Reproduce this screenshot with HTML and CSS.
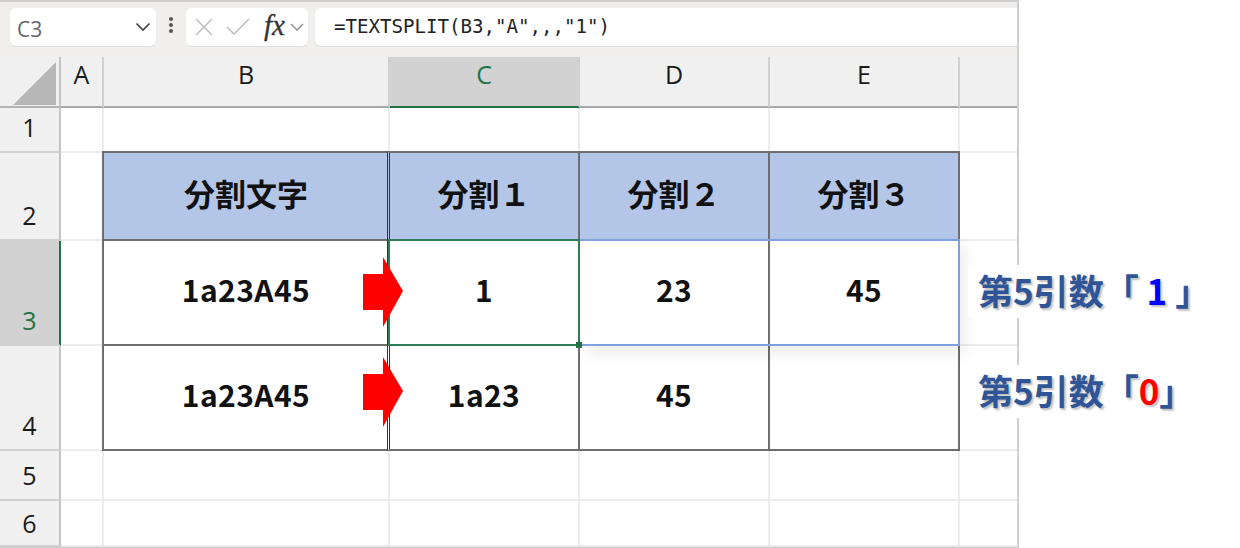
FILE: index.html
```html
<!DOCTYPE html>
<html lang="ja">
<head>
<meta charset="utf-8">
<title>TEXTSPLIT</title>
<link rel="stylesheet" href="styles.css">
</head>
<body>
<div class="app">
  <div class="fbar">
    <div class="namebox"><span class="cellref">C3</span>
      <svg class="chev" width="16" height="10" viewBox="0 0 16 10"><path d="M1.5 1.5 8 8l6.500-6.500" fill="none" stroke="#444" stroke-width="1.700"/></svg>
    </div>
    <svg class="dots" width="6" height="18" viewBox="0 0 6 18"><circle cx="3" cy="3" r="2" fill="#555"/><circle cx="3" cy="9" r="2" fill="#555"/><circle cx="3" cy="15" r="2" fill="#555"/></svg>
    <div class="btnbox">
      <svg class="ico" width="20" height="20" viewBox="0 0 20 20"><path d="M2 2l16 16M18 2 2 18" fill="none" stroke="#bdbdbd" stroke-width="1.500"/></svg>
      <svg class="ico ico-check" width="24" height="18" viewBox="0 0 24 18"><path d="M1 9l7 7L23 1" fill="none" stroke="#bdbdbd" stroke-width="1.500"/></svg>
      <span class="fx">fx</span>
      <svg class="chev2" width="14" height="9" viewBox="0 0 14 9"><path d="M1 1l6 6 6-6" fill="none" stroke="#8a8a8a" stroke-width="1.300"/></svg>
    </div>
    <div class="formula">=TEXTSPLIT(B3,"A",,,"1")</div>
  </div>
  <div class="sheet">
    <div class="hd corner"><svg width="43" height="43" viewBox="0 0 43 43"><path d="M43 0V43H0Z" fill="#b7b7b7"/></svg></div>
    <div class="hd col">A</div><div class="hd col">B</div><div class="hd col sel-col">C</div><div class="hd col">D</div><div class="hd col">E</div><div class="hd col blank"></div>

    <div class="hd row">1</div><div class="c"></div><div class="c"></div><div class="c"></div><div class="c"></div><div class="c"></div><div class="c last"></div>

    <div class="hd row">2</div><div class="c"></div><div class="c th tb-l">分割文字</div><div class="c th dbl">分割１</div><div class="c th">分割２</div><div class="c th">分割３</div><div class="c last"></div>

    <div class="hd row sel-row">3</div><div class="c"></div><div class="c td tb-l">1a23A45</div><div class="c td dbl">1</div><div class="c td">23</div><div class="c td">45</div><div class="c last"></div>

    <div class="hd row">4</div><div class="c"></div><div class="c td tb-l">1a23A45</div><div class="c td dbl">1a23</div><div class="c td">45</div><div class="c td"></div><div class="c last"></div>

    <div class="hd row">5</div><div class="c"></div><div class="c"></div><div class="c"></div><div class="c"></div><div class="c"></div><div class="c last"></div>

    <div class="hd row row-last">6</div><div class="c"></div><div class="c"></div><div class="c"></div><div class="c"></div><div class="c"></div><div class="c last"></div>

    <div class="range"></div>
    <div class="active"><span class="handle"></span></div>
  </div>
</div>
<svg class="arrow arrow-1" width="40" height="70" viewBox="0 0 40 70"><path d="M20 0 40 34 20 70V53H0V17H20Z" fill="#ff0000"/></svg>
<svg class="arrow arrow-2" width="40" height="70" viewBox="0 0 40 70"><path d="M20 0 40 34 20 70V53H0V17H20Z" fill="#ff0000"/></svg>
<div class="note note-1">第5引数「<span class="blue"> 1 </span>」</div>
<div class="note note-2">第5引数「<span class="red">0</span>」</div>
</body>
</html>
```
FILE: styles.css
```css
* { box-sizing: border-box; }
html, body { margin: 0; padding: 0; }
body {
  width: 1240px;
  height: 548px;
  background: #fff;
  overflow: hidden;
  position: relative;
  font-family: "Noto Sans CJK JP", "Noto Sans", sans-serif;
}
.app {
  width: 1019px;
  height: 548px;
  border-right: 2px solid #d0d0d0;
  border-bottom: 1px solid #c8c8c8;
  display: flex;
  flex-direction: column;
}
.fbar {
  height: 57px;
  flex: none;
  background: #f1efee;
  border-top: 2px solid #cfcfcf;
  padding: 6px 0 11px 10px;
  display: flex;
  align-items: stretch;
}
.namebox, .btnbox, .formula { background: #fff; border-radius: 6px; box-shadow: 0 1px 0 #e0e0e0; }
.namebox {
  width: 146px;
  display: flex;
  align-items: center;
  justify-content: space-between;
  padding: 3px 5px 0 7px;
}
.cellref { font: 21px "Open Sans", sans-serif; color: #666; }
.chev { margin-top: -3px; }
.dots { margin: 8px 12px 0 12px; }
.btnbox {
  width: 122px;
  display: flex;
  align-items: center;
  padding: 0 0 0 8px;
}
.ico-check { margin-left: 12px; }
.fx {
  font: italic 29px/1 "Liberation Serif", serif;
  color: #333;
  -webkit-text-stroke: .3px #333;
  margin-left: 14px;
  margin-top: -4px;
}
.chev2 { margin-left: 5px; }
.formula {
  margin-left: 7px;
  flex: 1;
  border-radius: 6px 0 0 6px;
  padding: 1px 0 0 19px;
  font: 19.100px/36px "DejaVu Sans Mono", monospace;
  color: #222;
  white-space: pre;
}
.sheet {
  position: relative;
  flex: 1;
  display: grid;
  grid-template-columns: 61px 43px 286px 190px 190px 190px 57px;
  grid-template-rows: 51px 45px 88px 105px 105px 50px 1fr;
}
.hd {
  background: #f0f0f0;
  color: #1a1a1a;
  font: 25px/1 "Open Sans", sans-serif;
  display: flex;
  justify-content: center;
}
.corner { border-right: 2px solid #c4c4c4; border-bottom: 2px solid #b4b4b4; padding: 5px 3px 0 0; justify-content: flex-end; }
.col { border-right: 2px solid #d0d0d0; border-bottom: 2px solid #a8a8a8; padding-top: 5px; }
.blank { border-right: 0; }
.sel-col { background: #d2d2d2; color: #217346; border-bottom-color: #217346; }
.row { border-right: 2px solid #c4c4c4; border-bottom: 2px solid #d0d0d0; align-items: flex-end; padding-bottom: 11px; }
.row-last { padding-bottom: 9px; }
.sel-row { background: #d2d2d2; color: #217346; border-right-color: #217346; }
.c { border-right: 2px solid #ececec; border-bottom: 2px solid #ececec; background: #fff; min-width: 0; }
.last { border-right: 0; }
.th, .td {
  display: flex;
  align-items: center;
  justify-content: center;
  border-right: 2px solid #6e6e6e;
  border-bottom: 2px solid #6e6e6e;
  font-weight: 700;
  color: #111;
}
.th {
  background: #b4c6e7;
  font-size: 31px;
  border-top: 2px solid #6e6e6e;
  margin-top: -2px;
  padding-bottom: 8px;
}
.td { font-size: 30px; letter-spacing: .4px; padding-bottom: 7px; }
.tb-l { border-left: 2px solid #6e6e6e; margin-left: -2px; }
.dbl { border-left: 3px double #333; margin-left: -3px; }
.range {
  position: absolute;
  left: 580px;
  top: 182px;
  width: 380px;
  height: 107px;
  border: 2px solid #7ea0dc;
  border-left: 0;
  box-shadow: 6px 8px 14px rgba(0, 0, 0, .07);
}
.active {
  position: absolute;
  left: 388px;
  top: 182px;
  width: 192px;
  height: 107px;
  border: 2px solid #2f7d57;
}
.handle {
  position: absolute;
  right: -4px;
  bottom: -4px;
  width: 6px;
  height: 6px;
  background: #217346;
}
.arrow { position: absolute; left: 363px; }
.arrow-1 { top: 257px; }
.arrow-2 { top: 357px; }
.note {
  position: absolute;
  left: 968px;
  height: 53px;
  padding-left: 10px;
  padding-right: 10px;
  font-size: 35px;
  line-height: 50px;
  font-weight: 700;
  color: #2f5597;
  white-space: pre;
  background: #fff;
  text-shadow: 2px 2px 2px rgba(0, 0, 0, .25);
}
.note-1 { top: 265px; }
.note-2 { top: 365px; }
.blue { color: #0000ff; }
.red { color: #ff0000; }
```
